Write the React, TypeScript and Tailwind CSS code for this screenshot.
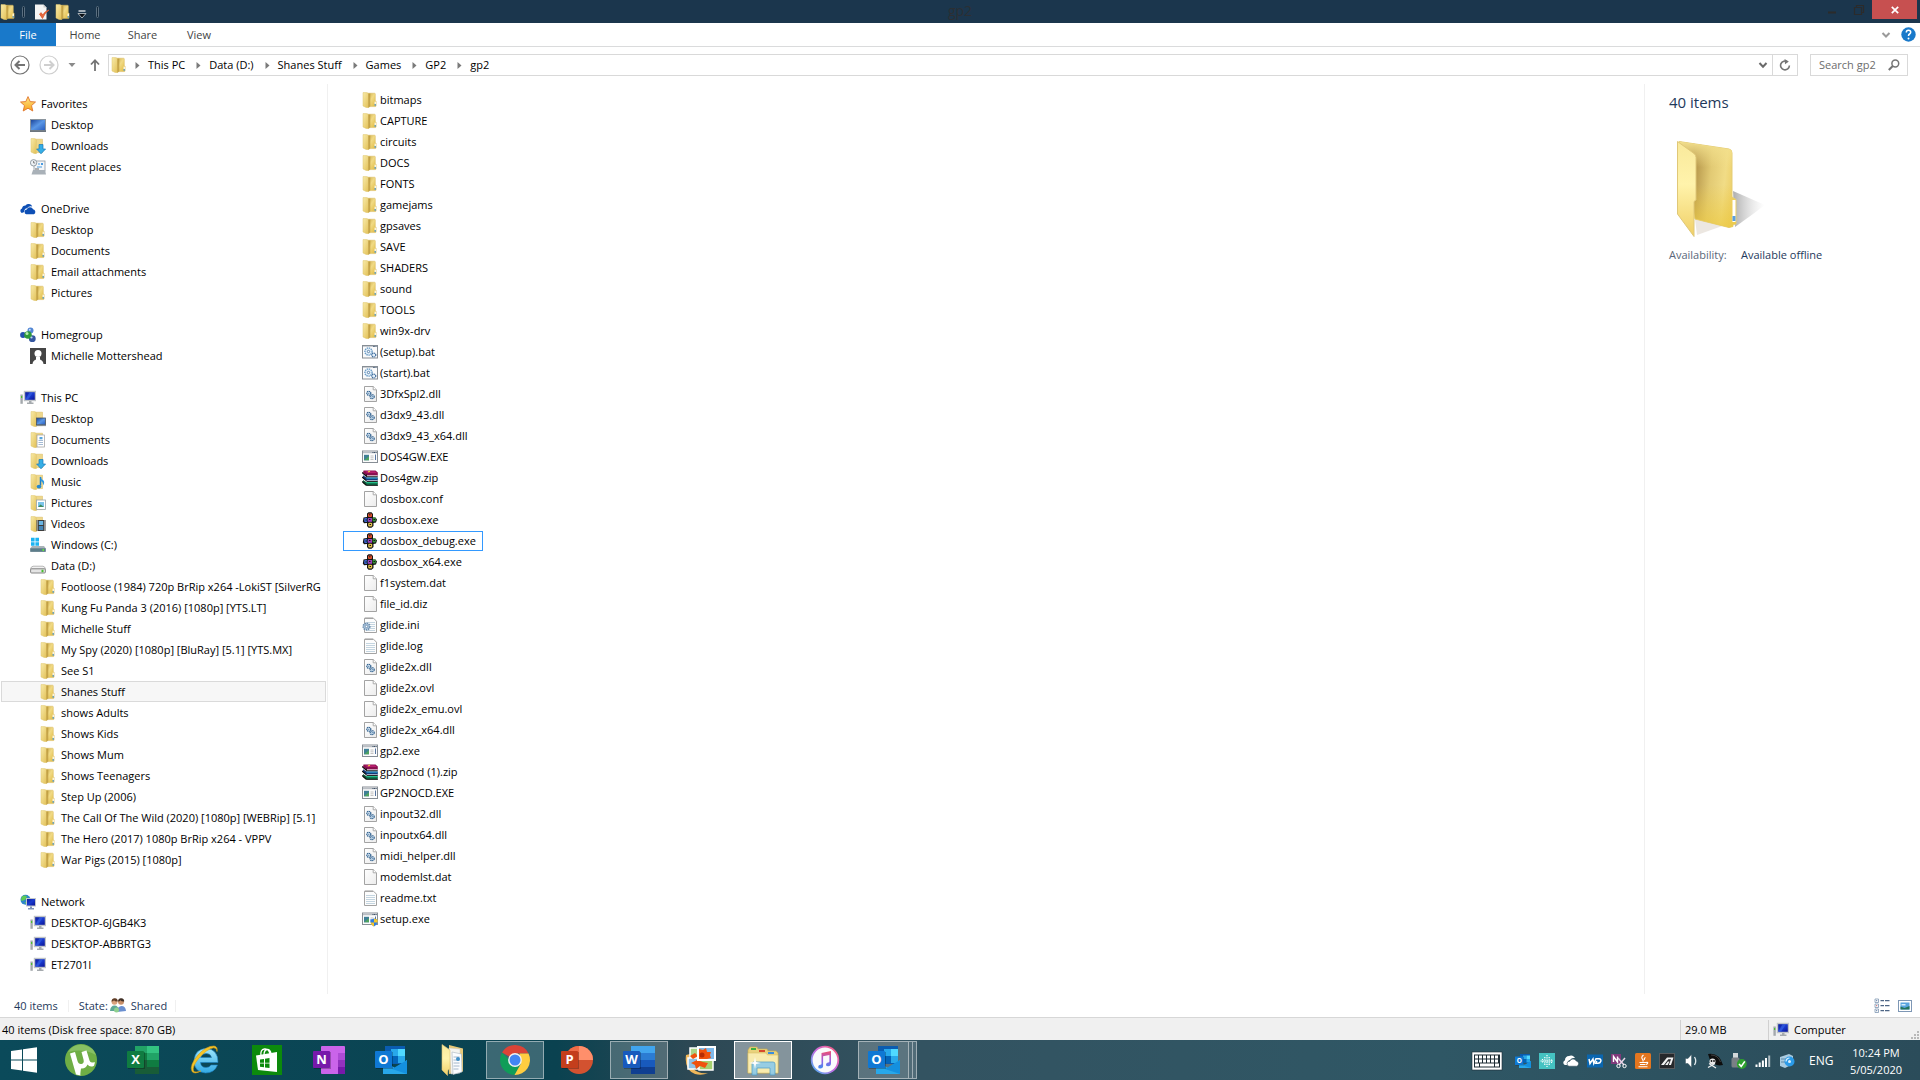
import React from "react";

type IconProps = { className?: string };

function Svg({ children, className = "h-4 w-4", box = "0 0 16 16" }: { children: React.ReactNode; className?: string; box?: string }) {
  return (
    <svg viewBox={box} className={"shrink-0 " + className} aria-hidden="true">
      {children}
    </svg>
  );
}

/* ---------- shared gradients ---------- */

function Gradients() {
  return (
    <svg className="absolute h-0 w-0" aria-hidden="true">
      <defs>
        <linearGradient id="folderFront" x1="0" y1="0" x2="1" y2="1">
          <stop offset="0" stopColor="#f8eaa9" />
          <stop offset="1" stopColor="#e2c055" />
        </linearGradient>
        <linearGradient id="folderBack" x1="0" y1="0" x2="1" y2="1">
          <stop offset="0" stopColor="#c9a945" />
          <stop offset="0.45" stopColor="#f1da85" />
          <stop offset="1" stopColor="#dfb83c" />
        </linearGradient>
        <linearGradient id="screen" x1="0" y1="0" x2="1" y2="1">
          <stop offset="0" stopColor="#0a1590" />
          <stop offset="0.5" stopColor="#1a3cd0" />
          <stop offset="1" stopColor="#080c8c" />
        </linearGradient>
        <linearGradient id="desk" x1="0" y1="0" x2="1" y2="1">
          <stop offset="0" stopColor="#173f96" />
          <stop offset="0.5" stopColor="#5a97e6" />
          <stop offset="1" stopColor="#2558bb" />
        </linearGradient>
        <linearGradient id="star" x1="0" y1="0" x2="0" y2="1">
          <stop offset="0" stopColor="#ffe98a" />
          <stop offset="1" stopColor="#f7a21b" />
        </linearGradient>
        <linearGradient id="paper" x1="0" y1="0" x2="1" y2="1">
          <stop offset="0" stopColor="#ffffff" />
          <stop offset="1" stopColor="#ececec" />
        </linearGradient>
        <linearGradient id="bigFront" x1="0" y1="0" x2="0" y2="1">
          <stop offset="0" stopColor="#f9e99b" />
          <stop offset="0.45" stopColor="#fff3ab" />
          <stop offset="1" stopColor="#f0cf66" />
        </linearGradient>
        <linearGradient id="bigBack" x1="0" y1="0" x2="1" y2="0.15">
          <stop offset="0.28" stopColor="#b09045" />
          <stop offset="0.6" stopColor="#e2ca74" />
          <stop offset="0.85" stopColor="#f1dc86" />
          <stop offset="1" stopColor="#edd06a" />
        </linearGradient>
        <linearGradient id="bigBackTop" x1="0" y1="0" x2="0" y2="1">
          <stop offset="0" stopColor="#f3e08d" />
          <stop offset="0.3" stopColor="#f3e08d" stopOpacity="0" />
        </linearGradient>
        <linearGradient id="bigBackLow" x1="0" y1="0" x2="0" y2="1">
          <stop offset="0.5" stopColor="#ecc93f" stopOpacity="0" />
          <stop offset="1" stopColor="#ecc93f" stopOpacity="0.7" />
        </linearGradient>
        <linearGradient id="shade" x1="0" y1="0" x2="1" y2="0">
          <stop offset="0" stopColor="#8c8c8c" stopOpacity="0.7" />
          <stop offset="1" stopColor="#c8c8c8" stopOpacity="0" />
        </linearGradient>
        <linearGradient id="ie" x1="0" y1="0" x2="0" y2="1">
          <stop offset="0" stopColor="#9fe6fb" />
          <stop offset="1" stopColor="#31a9e4" />
        </linearGradient>
        <linearGradient id="tunesRing" x1="1" y1="0" x2="0" y2="1">
          <stop offset="0" stopColor="#fb5c74" />
          <stop offset="0.5" stopColor="#c869e0" />
          <stop offset="1" stopColor="#3fb6f5" />
        </linearGradient>
        <linearGradient id="tunesNote" x1="0" y1="0" x2="0" y2="1">
          <stop offset="0" stopColor="#f0506e" />
          <stop offset="0.5" stopColor="#a05ae0" />
          <stop offset="1" stopColor="#3d8ff0" />
        </linearGradient>
      </defs>
    </svg>
  );
}

/* ---------- 16px icons ---------- */

function FolderShapes() {
  return (
    <>
      <path d="M5 1.2h7.5q.8 0 .8.8v6.4l.8.8v4.6q0 .8-.8.8H6z" fill="url(#folderBack)" stroke="#d8b95c" strokeWidth=".5" />
      <path d="M1 .6h3.800l2 1.200v13.900L4 15.400 1 14z" fill="url(#folderFront)" stroke="#dfc56c" strokeWidth=".5" />
      <path d="M6.300 1.800v13.800l2-1V1.500z" fill="#b8963a" opacity=".75" />
      <rect x="12.600" y="9.600" width="1.200" height="2.400" fill="#fff" />
      <rect x="12.600" y="12" width="1.200" height="1.800" fill="#4f9fe0" />
    </>
  );
}

const Folder = ({ className }: IconProps) => (
  <Svg className={className}>
    <FolderShapes />
  </Svg>
);

function FolderBase() {
  return (
    <>
      <path d="M5 1.200h7.500v13.400H5z" fill="#eed88c" stroke="#d8b95c" strokeWidth=".5" />
      <path d="M1 .6h3.800l1.600 1.200v13.900L4 15.400 1 14z" fill="url(#folderFront)" stroke="#dfc56c" strokeWidth=".5" />
    </>
  );
}

const FolderDown = () => (
  <Svg>
    <FolderBase />
    <path d="M9 6.500h4V11h2.600l-4.600 4.800L6.600 11H9z" fill="#35aee6" stroke="#1879b8" strokeWidth=".7" />
  </Svg>
);

const FolderDesk = () => (
  <Svg>
    <FolderBase />
    <rect x="6.500" y="7" width="9" height="6.800" fill="url(#desk)" stroke="#4a5560" strokeWidth=".8" />
    <path d="M6 14.600h10" stroke="#7d8790" />
  </Svg>
);

const FolderDoc = () => (
  <Svg>
    <FolderBase />
    <rect x="7" y="3" width="7.500" height="12" fill="#fff" stroke="#9a9a9a" strokeWidth=".7" />
    <path d="M8.500 8.500h4.500M8.500 10.500h4.500M8.500 12.500h4.500" stroke="#8ea9c9" strokeWidth=".8" />
    <rect x="9.500" y="5" width="3" height="2.300" fill="#57a5dd" />
  </Svg>
);

const FolderMusic = () => (
  <Svg>
    <FolderBase />
    <path d="M10.500 3v8.500" stroke="#1d7cc6" strokeWidth="1.500" />
    <path d="M10.500 2.500q.5 3 3 4 1.500 2-.4 5 .2-3.600-2.600-4.500z" fill="#2f98de" />
    <ellipse cx="9" cy="12.600" rx="2.300" ry="1.900" fill="#2488d0" />
  </Svg>
);

const FolderPic = () => (
  <Svg>
    <FolderBase />
    <rect x="6.500" y="5" width="9" height="9.500" fill="#fff" stroke="#9aa3aa" strokeWidth=".8" />
    <rect x="8" y="7" width="6" height="5" fill="#7cc4ea" />
    <path d="M8 12l2.500-2.500L14 12z" fill="#3f8a5a" />
  </Svg>
);

const FolderVideo = () => (
  <Svg>
    <FolderBase />
    <rect x="6.500" y="4" width="9" height="11" fill="#3d3d3d" />
    <path d="M7.500 4.500v10.500M14.500 4.500v10.500" stroke="#e8e8e8" strokeWidth="1" strokeDasharray="1 1" />
    <rect x="8.800" y="5" width="4.400" height="4" fill="#69b5e4" />
    <rect x="8.800" y="10" width="4.400" height="4" fill="#4586b8" />
  </Svg>
);

const StarIcon = () => (
  <Svg>
    <path d="M8 .6l2.200 5 5.300.4-4 3.600 1.300 5.400L8 12.200 3.200 15l1.300-5.400-4-3.600 5.300-.4z" fill="url(#star)" stroke="#e0752c" strokeWidth=".9" strokeLinejoin="round" />
  </Svg>
);

const DesktopIcon = () => (
  <Svg>
    <rect x=".5" y="2.500" width="15" height="11" fill="url(#desk)" stroke="#8b959e" />
    <path d="M0 14.200h16" stroke="#5d6770" strokeWidth="1.400" />
  </Svg>
);

const RecentIcon = () => (
  <Svg>
    <rect x="4" y="2" width="11" height="10" fill="#f4f6f8" stroke="#8e979f" strokeWidth=".8" />
    <circle cx="3.600" cy="3.800" r="3.200" fill="#eef2f5" stroke="#8a949c" strokeWidth=".9" />
    <path d="M3.600 2v2h1.600" stroke="#555" strokeWidth=".7" fill="none" />
    <rect x="11" y="4" width="2" height="2" fill="#4a9be0" />
    <path d="M8 5h2M7 8h5" stroke="#4a9be0" strokeWidth="1.100" />
    <path d="M3 11h12l1 4.500H1.500z" fill="#a9b1b8" />
    <path d="M5 10h4" stroke="#666" />
  </Svg>
);

const OneDriveIcon = () => (
  <Svg>
    <path d="M1.800 12A2.400 2.400 0 0 1 2 7.500 3.500 3.500 0 0 1 5.500 4.500 4 4 0 0 1 12.300 5.500Q9 4.500 7 7.300 4.200 7.600 4.300 11z" fill="#0d4fb5" />
    <path d="M6.300 13.200a2.400 2.400 0 0 1 .5-4.700 3.400 3.400 0 0 1 6.300-.2 2.600 2.600 0 0 1 .8 4.900z" fill="#0d4fb5" />
  </Svg>
);

const HomegroupIcon = () => (
  <Svg>
    <circle cx="10.500" cy="3.500" r="3" fill="#5286d4" />
    <circle cx="3" cy="8" r="2.900" fill="#2450ae" />
    <circle cx="12.300" cy="11.700" r="3.400" fill="#34569f" />
    <circle cx="8" cy="8" r="3.800" fill="#2f9a3a" />
    <circle cx="7" cy="6.600" r="1.500" fill="#b9ecb0" />
    <circle cx="9.800" cy="2.700" r="1" fill="#c4defa" />
    <circle cx="11.500" cy="10.500" r="1.100" fill="#bcd5f6" />
  </Svg>
);

const UserIcon = () => (
  <Svg>
    <rect width="16" height="16" fill="#454545" />
    <circle cx="8" cy="5.500" r="3.500" fill="#fff" />
    <path d="M2.500 16q.3-3.500 3.500-4.500V9h4v2.500q3.200 1 3.500 4.500z" fill="#fff" />
  </Svg>
);

function PcShapes() {
  return (
    <>
      <rect x="4.500" y="1.500" width="11" height="9" fill="url(#screen)" stroke="#bfc3c7" strokeWidth="1.400" />
      <path d="M9.500 2.300L5.500 9.500H8l5-7.200z" fill="#3f70ee" opacity=".5" />
      <path d="M9 11h2.500v1.500h2V14H7v-1.500h2z" fill="#a5aaae" />
      <path d="M.4 4.500h2.400v9.300H.4z" fill="#a4a9ad" />
      <rect x="1" y="6" width="1.200" height="2" fill="#49c22c" />
    </>
  );
}

const PcIcon = () => (
  <Svg>
    <PcShapes />
  </Svg>
);

const NetworkIcon = () => (
  <Svg>
    <circle cx="5.500" cy="5.700" r="5" fill="#2f86c9" />
    <path d="M2 2.500q3-2 5 0L5 6 1.500 7q-1-2 .5-4.500zM5 8l3 0-2 2.500z" fill="#5fcb55" />
    <rect x="6.500" y="4.500" width="9" height="7.500" fill="url(#screen)" stroke="#c3c7cb" />
    <path d="M10 12.500h2v1.500h2v1.500H8V14h2z" fill="#7f93b8" />
  </Svg>
);

const DriveC = () => (
  <Svg>
    <path d="M1 .8h3.600v3.600H1zM5.400.8H9v3.600H5.400zM1 5.200h3.600v3.600H1zM5.400 5.200H9v3.600H5.400z" fill="#1cb4f2" />
    <path d="M2 9h12l1.700 2.300v3.500H.3v-3.500z" fill="#aab3b8" />
    <path d="M.3 11.300h15.400v3.500H.3z" fill="#5c7d8a" />
    <rect x="12.500" y="12" width="1.500" height="2" fill="#61e33b" />
  </Svg>
);

const DriveD = () => (
  <Svg>
    <path d="M3 8.200h10q2.500.8 2.500 3H.5q0-2.200 2.500-3z" fill="#f1f1f1" stroke="#9c9c9c" strokeWidth=".7" />
    <rect x=".6" y="10.800" width="14.800" height="4.200" rx="1" fill="#e4e4e4" stroke="#7c7c7c" strokeWidth=".9" />
    <rect x="11.500" y="11.800" width="2" height="2.400" fill="#45bd2c" />
  </Svg>
);

const Page = ({ children }: { children?: React.ReactNode }) => (
  <Svg>
    <path d="M2.500.5h8.700l3.300 3.300v11.700h-12z" fill="url(#paper)" stroke="#a3a3a3" />
    <path d="M11.200.5v3.300h3.300" fill="#fff" stroke="#a3a3a3" strokeWidth=".9" />
    {children}
  </Svg>
);

const FilePage = () => <Page />;

const Dll = () => (
  <Page>
    <circle cx="6.800" cy="7.300" r="2" fill="#dcebf7" stroke="#356491" strokeWidth="1.300" strokeDasharray="1.200 .5" />
    <circle cx="10.200" cy="10.700" r="2" fill="#dcebf7" stroke="#356491" strokeWidth="1.300" strokeDasharray="1.200 .5" />
    <circle cx="6.800" cy="7.300" r=".6" fill="#41729f" />
    <circle cx="10.200" cy="10.700" r=".6" fill="#41729f" />
  </Page>
);

const Bat = () => (
  <Svg>
    <rect x=".5" y="1.500" width="15" height="12.500" fill="#fbfbfb" stroke="#878e95" />
    <path d="M1 2.500h14" stroke="#c9cdd2" strokeWidth="1" />
    <path d="M11 2.500h3.500" stroke="#49607a" strokeWidth="1" strokeDasharray=".8 .5" />
    <circle cx="6.500" cy="7.500" r="3.600" fill="#e4f0fa" stroke="#6b9cc6" strokeWidth="1.400" strokeDasharray="1.400 .7" />
    <circle cx="6.500" cy="7.500" r="1.200" fill="#fff" stroke="#3e6c9b" strokeWidth=".8" />
    <circle cx="11.800" cy="11" r="2" fill="#e4f0fa" stroke="#3e6c9b" strokeWidth="1.200" strokeDasharray="1.200 .5" />
  </Svg>
);

function ExeShapes() {
  return (
    <>
      <rect x=".5" y="2" width="15" height="11.500" fill="#fcfcfc" stroke="#878e95" />
      <path d="M1 3.500h14" stroke="#b9bec4" strokeWidth="1.500" />
      <path d="M10.500 3.500h4" stroke="#33465c" strokeWidth="1" strokeDasharray="1 .6" />
      <rect x="2" y="5.800" width="5" height="5.500" fill="#3f7f96" />
      <path d="M2 11.300l5-4v4z" fill="#4fa35f" />
      <path d="M8.500 7h3M8.500 8.800h3M8.500 10.500h3" stroke="#b5b5b5" strokeWidth=".8" />
      <path d="M13.500 5.500v5.500" stroke="#5775a0" strokeWidth="1" />
    </>
  );
}

const Exe = () => (
  <Svg>
    <ExeShapes />
  </Svg>
);

const SetupExe = () => (
  <Svg>
    <ExeShapes />
    <path d="M12 7.500q2 1 3.700 1 .2 5-3.700 7-3.900-2-3.700-7 1.700 0 3.700-1z" fill="#2f7de0" />
    <path d="M12 7.500q2 1 3.700 1v3H12zM8.400 11.500H12v4q-3-1.500-3.600-4z" fill="#f5c62c" />
  </Svg>
);

const Zip = () => (
  <Svg>
    <path d="M1.500.4h12l2.300 2.200v3.200H4.500L1 3z" fill="#8a1050" />
    <path d="M3 1.200h10l1.700 1.700H5z" fill="#b81f6f" />
    <path d="M1 5.300l3.500 2.200h11.300v3.300H4.500L1 8.500z" fill="#143a78" />
    <path d="M4.500 7.500h11v1.200h-11z" fill="#2c9fd0" />
    <path d="M1 10l3.500 2.200h11.300v3.500H4.500L1 13z" fill="#0c5c3c" />
    <path d="M4.500 12h11v1.300h-11z" fill="#22c08a" />
    <path d="M0 2.500l4.300 3.600v-1.500M0 7l4.300 3.600M0 11.500l4.300 3.700" stroke="#111" strokeWidth="1.200" fill="none" />
    <path d="M5 5.800h10.500M5 10.800h10.500M5 15.500h10.500" stroke="#f5f5f5" strokeWidth=".7" />
    <path d="M4.500 6.700h11.300M4.500 11.500h11.300M4.500 15.600h11.300" stroke="#111" strokeWidth=".9" />
    <path d="M6 2l2-.8" stroke="#f3c83a" strokeWidth="1.300" />
  </Svg>
);

const Dosbox = () => (
  <Svg>
    <path d="M5 1.500L6.500.3h3L11 2v3.500h2.500l1.500 2-1 3-2.500.5v3l-2 1.700h-3L5 14v-3l-3 .3L.8 9.500l.7-4L5 5z" fill="#141414" />
    <rect x="6" y="1.500" width="4" height="3.500" rx="1" fill="#e0502c" />
    <rect x="2.200" y="6" width="3.200" height="4" rx="1" fill="#3a66d0" />
    <rect x="10.600" y="5.500" width="3.200" height="4" rx="1" fill="#37923a" />
    <rect x="6.200" y="10.800" width="4" height="3.700" rx="1" fill="#e2c14a" />
    <rect x="6" y="6" width="4" height="3.800" fill="#9a3db8" />
    <path d="M7 2.800h1.500M3.500 8H5M11.500 7.500H13M7.500 12.500H9M7 7.500h1.500" stroke="#141414" strokeWidth="1" />
  </Svg>
);

const NotePage = () => (
  <Svg>
    <path d="M2.500 1.200h9l3 3v11.300h-12z" fill="#fdfdfd" stroke="#a3a3a3" />
    <path d="M3.500 1.200h8" stroke="#8b8b8b" strokeWidth="1.600" strokeDasharray="1 1" />
    <path d="M4 5.500h9M4 7.500h9M4 9.500h9M4 11.500h9M4 13.500h9" stroke="#bdd0dd" strokeWidth=".9" />
  </Svg>
);

const Ini = () => (
  <Svg>
    <path d="M2.500 1.200h9l3 3v11.300h-12z" fill="#fdfdfd" stroke="#a3a3a3" />
    <path d="M3.500 1.200h8" stroke="#8b8b8b" strokeWidth="1.600" strokeDasharray="1 1" />
    <path d="M4 5.500h9M4 7.500h9M4 9.500h9M4 11.500h9M4 13.500h9" stroke="#bdd0dd" strokeWidth=".9" />
    <circle cx="4.500" cy="9.500" r="3.300" fill="#a9c3da" stroke="#6d8eb0" strokeWidth="1.600" strokeDasharray="1.400 .8" />
    <circle cx="4.500" cy="9.500" r="1.200" fill="#fff" stroke="#5a7ea3" strokeWidth=".7" />
  </Svg>
);

const PeopleIcon = () => (
  <Svg>
    <circle cx="4.500" cy="3.800" r="3" fill="#d9a27c" />
    <path d="M1.500 3.500Q2 0 5 .3q3 .2 2.700 3.300-3 .2-3.700-1.300-.8 1.200-2.500 1.200z" fill="#5e3c26" />
    <path d="M0 13q.5-5.500 4.500-5.500T9 13z" fill="#5fa896" />
    <circle cx="11" cy="3.800" r="3" fill="#c98f68" />
    <path d="M8 3.500Q8.500 0 11.300.3q3 .2 2.900 3.300-3 .2-3.700-1.300-.8 1.200-2.500 1.200z" fill="#3f3027" />
    <path d="M7 14q.5-6 4.500-6t4.500 5z" fill="#6a8fd0" />
    <circle cx="6.500" cy="12" r="2.500" fill="#8fd08f" />
  </Svg>
);

/* ---------- data ---------- */

type NavRow = { text: string; level: 0 | 1 | 2; icon: () => React.ReactElement; selected?: boolean };

const F = () => <Folder />;

const navGroups: NavRow[][] = [
  [
    { text: "Favorites", level: 0, icon: StarIcon },
    { text: "Desktop", level: 1, icon: DesktopIcon },
    { text: "Downloads", level: 1, icon: FolderDown },
    { text: "Recent places", level: 1, icon: RecentIcon },
  ],
  [
    { text: "OneDrive", level: 0, icon: OneDriveIcon },
    { text: "Desktop", level: 1, icon: F },
    { text: "Documents", level: 1, icon: F },
    { text: "Email attachments", level: 1, icon: F },
    { text: "Pictures", level: 1, icon: F },
  ],
  [
    { text: "Homegroup", level: 0, icon: HomegroupIcon },
    { text: "Michelle Mottershead", level: 1, icon: UserIcon },
  ],
  [
    { text: "This PC", level: 0, icon: PcIcon },
    { text: "Desktop", level: 1, icon: FolderDesk },
    { text: "Documents", level: 1, icon: FolderDoc },
    { text: "Downloads", level: 1, icon: FolderDown },
    { text: "Music", level: 1, icon: FolderMusic },
    { text: "Pictures", level: 1, icon: FolderPic },
    { text: "Videos", level: 1, icon: FolderVideo },
    { text: "Windows (C:)", level: 1, icon: DriveC },
    { text: "Data (D:)", level: 1, icon: DriveD },
    { text: "Footloose (1984) 720p BrRip x264 -LokiST [SilverRG", level: 2, icon: F },
    { text: "Kung Fu Panda 3 (2016) [1080p] [YTS.LT]", level: 2, icon: F },
    { text: "Michelle Stuff", level: 2, icon: F },
    { text: "My Spy (2020) [1080p] [BluRay] [5.1] [YTS.MX]", level: 2, icon: F },
    { text: "See S1", level: 2, icon: F },
    { text: "Shanes Stuff", level: 2, icon: F, selected: true },
    { text: "shows Adults", level: 2, icon: F },
    { text: "Shows Kids", level: 2, icon: F },
    { text: "Shows Mum", level: 2, icon: F },
    { text: "Shows Teenagers", level: 2, icon: F },
    { text: "Step Up (2006)", level: 2, icon: F },
    { text: "The Call Of The Wild (2020) [1080p] [WEBRip] [5.1]", level: 2, icon: F },
    { text: "The Hero (2017) 1080p BrRip x264 - VPPV", level: 2, icon: F },
    { text: "War Pigs (2015) [1080p]", level: 2, icon: F },
  ],
  [
    { text: "Network", level: 0, icon: NetworkIcon },
    { text: "DESKTOP-6JGB4K3", level: 1, icon: PcIcon },
    { text: "DESKTOP-ABBRTG3", level: 1, icon: PcIcon },
    { text: "ET2701I", level: 1, icon: PcIcon },
  ],
];

const indent = { 0: "pl-[18px]", 1: "pl-[28px]", 2: "pl-[38px]" };

const files: [string, () => React.ReactElement][] = [
  ["bitmaps", F],
  ["CAPTURE", F],
  ["circuits", F],
  ["DOCS", F],
  ["FONTS", F],
  ["gamejams", F],
  ["gpsaves", F],
  ["SAVE", F],
  ["SHADERS", F],
  ["sound", F],
  ["TOOLS", F],
  ["win9x-drv", F],
  ["(setup).bat", Bat],
  ["(start).bat", Bat],
  ["3DfxSpl2.dll", Dll],
  ["d3dx9_43.dll", Dll],
  ["d3dx9_43_x64.dll", Dll],
  ["DOS4GW.EXE", Exe],
  ["Dos4gw.zip", Zip],
  ["dosbox.conf", FilePage],
  ["dosbox.exe", Dosbox],
  ["dosbox_debug.exe", Dosbox],
  ["dosbox_x64.exe", Dosbox],
  ["f1system.dat", FilePage],
  ["file_id.diz", FilePage],
  ["glide.ini", Ini],
  ["glide.log", NotePage],
  ["glide2x.dll", Dll],
  ["glide2x.ovl", FilePage],
  ["glide2x_emu.ovl", FilePage],
  ["glide2x_x64.dll", Dll],
  ["gp2.exe", Exe],
  ["gp2nocd (1).zip", Zip],
  ["GP2NOCD.EXE", Exe],
  ["inpout32.dll", Dll],
  ["inpoutx64.dll", Dll],
  ["midi_helper.dll", Dll],
  ["modemlst.dat", FilePage],
  ["readme.txt", NotePage],
  ["setup.exe", SetupExe],
];

/* ---------- window chrome ---------- */

const Grip = () => <span className="h-3 w-[3px] rounded-sm border border-[#5b6f80] bg-[#12283a]" />;

function TitleBar() {
  return (
    <header className="grid h-[23px] shrink-0 grid-cols-[1fr_auto_1fr] bg-[#1b364d]">
      <div className="flex items-center">
        <Folder />
        <span className="ml-[6px] flex"><Grip /></span>
        <button aria-label="Properties" className="ml-[9px]">
          <Svg>
            <path d="M1 .5h8.500l3 3v12H1z" fill="#f4f4f4" />
            <path d="M9.500.5v3h3" fill="#c9c9c9" />
            <path d="M5.500 10l3 4.500Q10.500 9 15 6q-4 1-6.300 5l-1.500-2.300z" fill="#e8673a" stroke="#d5532a" strokeWidth=".8" />
          </Svg>
        </button>
        <button aria-label="New folder" className="ml-[5px]"><Folder /></button>
        <button aria-label="Customize Quick Access Toolbar" className="ml-[5px] pt-1">
          <Svg className="h-3 w-3" box="0 0 12 12">
            <path d="M2.500 3h7" stroke="#fff" strokeWidth="1.200" />
            <path d="M2 5.500h8L6 10z" fill="#0a0f14" stroke="#dfe5ea" strokeWidth=".7" />
          </Svg>
        </button>
        <span className="ml-2 flex"><Grip /></span>
      </div>
      <h1 className="text-sm leading-[22px] text-[#2b2f33]">gp2</h1>
      <div className="flex items-start justify-end pr-[3px]">
        <button aria-label="Minimize" className="flex h-[19px] w-[26px] items-center justify-center">
          <Svg className="h-3 w-3" box="0 0 12 12"><path d="M2 8.500h8" stroke="#2b2b2b" strokeWidth="2" /></Svg>
        </button>
        <button aria-label="Restore" className="flex h-[19px] w-[27px] items-center justify-center">
          <Svg className="h-3 w-3" box="0 0 12 12">
            <path d="M1.500 3.500h7v7h-7zM3.500 3V1.500h7v7H9" stroke="#2b2b2b" strokeWidth="1.200" fill="none" />
          </Svg>
        </button>
        <button aria-label="Close" className="flex h-[19px] w-[45px] items-center justify-center bg-[#c75050]">
          <Svg className="h-2 w-2" box="0 0 8 8"><path d="M.8.8l6.400 6.400M7.200.8L.8 7.200" stroke="#fff" strokeWidth="1.700" /></Svg>
        </button>
      </div>
    </header>
  );
}

function Ribbon() {
  return (
    <div className="flex h-6 shrink-0 items-stretch border-b border-[#dadbdc] bg-white text-[#444]">
      <button className="w-14 bg-[#1979ca] text-white">File</button>
      <button className="w-[58px] pt-px">Home</button>
      <button className="w-[57px] pt-px">Share</button>
      <button className="w-[56px] pt-px">View</button>
      <div className="ml-auto flex items-center gap-[10px] pr-1">
        <button aria-label="Expand the Ribbon">
          <Svg className="h-[10px] w-[10px]" box="0 0 10 10"><path d="M1.500 3L5 6.500 8.500 3" stroke="#9a9a9a" strokeWidth="2" fill="none" /></Svg>
        </button>
        <button aria-label="Help">
          <Svg className="h-[15px] w-[15px]" box="0 0 15 15">
            <circle cx="7.500" cy="7.500" r="7.200" fill="#1979ca" />
            <path d="M5.300 5.500q0-2.200 2.200-2.200t2.200 2q0 1-1.100 1.700-1.100.7-1.100 1.900" stroke="#fff" strokeWidth="1.500" fill="none" />
            <circle cx="7.500" cy="11.500" r="1" fill="#fff" />
          </Svg>
        </button>
      </div>
    </div>
  );
}

const crumbs = ["This PC", "Data (D:)", "Shanes Stuff", "Games", "GP2", "gp2"];

function AddressBar() {
  return (
    <div className="flex shrink-0 items-center py-[7px] pl-[10px] pr-3">
      <button aria-label="Back">
        <Svg className="h-5 w-5" box="0 0 20 20">
          <circle cx="10" cy="10" r="9" fill="#fff" stroke="#747474" strokeWidth="1.200" />
          <path d="M15 10H6M9.500 6L5.500 10l4 4" stroke="#747474" strokeWidth="2" fill="none" />
        </Svg>
      </button>
      <button aria-label="Forward" className="ml-[9px]">
        <Svg className="h-5 w-5" box="0 0 20 20">
          <circle cx="10" cy="10" r="9" fill="#fff" stroke="#cfcfcf" strokeWidth="1.200" />
          <path d="M5 10h9M10.500 6l4 4-4 4" stroke="#cfcfcf" strokeWidth="2" fill="none" />
        </Svg>
      </button>
      <button aria-label="Recent locations" className="ml-[9px]">
        <Svg className="h-2 w-2" box="0 0 8 8"><path d="M.5 2h7L4 6z" fill="#8a8a8a" /></Svg>
      </button>
      <button aria-label="Up" className="ml-3">
        <Svg className="h-[14px] w-[14px]" box="0 0 14 14"><path d="M7 13V2.500M3 6.500L7 2.200l4 4.300" stroke="#747474" strokeWidth="1.800" fill="none" /></Svg>
      </button>
      <div className="ml-[6px] flex h-[22px] min-w-0 flex-1 items-stretch border border-[#d9d9d9]">
        <span className="flex items-center pl-[2px]"><Folder /></span>
        <nav aria-label="Address" className="flex items-center">
          {crumbs.map((c) => (
            <span key={c} className="flex items-center">
              <span className="flex w-[18px] justify-center pl-[3px]">
                <Svg className="h-[7px] w-[5px]" box="0 0 5 7"><path d="M.5 0v7l4-3.500z" fill="#7a7a7a" /></Svg>
              </span>
              <button className="px-[3px] text-black">{c}</button>
            </span>
          ))}
        </nav>
        <button aria-label="Previous locations" className="ml-auto w-[18px]">
          <Svg className="mx-auto h-[10px] w-[10px]" box="0 0 10 10"><path d="M1.500 3L5 6.800 8.500 3" stroke="#6a6a6a" strokeWidth="2" fill="none" /></Svg>
        </button>
        <button aria-label="Refresh" className="flex w-[25px] items-center justify-center border-l border-[#d9d9d9]">
          <Svg className="h-3 w-3" box="0 0 12 12">
            <path d="M8.500 2.800A4.400 4.400 0 1 0 10.400 6.500" stroke="#747474" strokeWidth="1.600" fill="none" />
            <path d="M5.500 0l4.300 2.600L6 5.200z" fill="#747474" />
          </Svg>
        </button>
      </div>
      <div className="ml-3 flex h-[22px] w-[98px] items-center border border-[#d9d9d9] pl-2 pr-[7px]">
        <input aria-label="Search gp2" placeholder="Search gp2" className="w-full min-w-0 bg-transparent outline-none placeholder:text-[#6d6d6d]" />
        <button aria-label="Search">
          <Svg className="h-3 w-3" box="0 0 12 12">
            <circle cx="7.300" cy="4.500" r="3.400" stroke="#747474" strokeWidth="1.500" fill="none" />
            <path d="M4.800 7L.8 11" stroke="#747474" strokeWidth="2" />
          </Svg>
        </button>
      </div>
    </div>
  );
}

/* ---------- panes ---------- */

function NavPane() {
  return (
    <nav aria-label="Navigation" className="flex w-[328px] shrink-0 flex-col gap-[21px] overflow-hidden border-r border-[#f0f0f0] pl-px pr-px pt-[9px] text-black">
      {navGroups.map((group) => (
        <ul key={group[0].text}>
          {group.map((row) => {
            const Icon = row.icon;
            return (
              <li key={row.text}>
                <a
                  href="#"
                  className={
                    "flex h-[21px] items-center gap-[5px] overflow-hidden whitespace-nowrap border " +
                    indent[row.level] +
                    (row.selected ? " border-[#dadada] bg-[#f7f7f7]" : " border-transparent")
                  }
                >
                  <Icon />
                  <span>{row.text}</span>
                </a>
              </li>
            );
          })}
        </ul>
      ))}
    </nav>
  );
}

function FileList() {
  return (
    <main className="min-w-0 flex-1 pl-[15px] pt-[5px]">
      <ul className="flex flex-col items-start">
        {files.map(([name, Icon]) => (
          <li key={name} className="flex h-[21px] items-center">
            <button
              className={
                "flex h-5 items-center gap-[2px] whitespace-nowrap border pl-[18px] pr-[6px] text-black " +
                (name === "dosbox_debug.exe" ? "border-[#3399ff]" : "border-transparent")
              }
            >
              <Icon />
              <span>{name}</span>
            </button>
          </li>
        ))}
      </ul>
    </main>
  );
}

function DetailsPane() {
  return (
    <aside className="w-[276px] shrink-0 border-l border-[#f0f0f0] pl-6 pt-[7px] text-[#1e395b]">
      <h2 className="text-[15px] leading-[22px]">40 items</h2>
      <svg viewBox="0 0 96 102" className="ml-[6px] mt-6 h-[102px] w-24" aria-hidden="true">
        <path d="M58 54l32 14-12 9-18 13z" fill="url(#shade)" />
        <path d="M20 82l30 6-28 10z" fill="#d9cfc4" opacity=".5" />
        <path d="M4 4.500L54 12q3 .6 3 4v44l4 2.500v24.500l-3 .5v2L54 90.500 20 82z" fill="url(#bigBack)" stroke="#e5cd77" strokeWidth="1" />
        <path d="M4 4.500L54 12q3 .6 3 4v44l4 2.500v24.500l-3 .5v2L54 90.500 20 82z" fill="url(#bigBackTop)" />
        <path d="M4 4.500L54 12q3 .6 3 4v44l4 2.500v24.500l-3 .5v2L54 90.500 20 82z" fill="url(#bigBackLow)" />
        <rect x="57.500" y="63" width="3" height="22" fill="#fff" />
        <rect x="57.500" y="79" width="3" height="5" fill="#5a9fe0" />
        <path d="M2.500 4.500L19 16.500q2 1.500 2 4V63l-2 1.500V99.500L2.500 77z" fill="url(#bigFront)" stroke="#e0c878" strokeWidth="1" />
      </svg>
      <dl className="mt-2 flex gap-3">
        <dt className="w-[60px] text-[#5a6779]">Availability:</dt>
        <dd>Available offline</dd>
      </dl>
    </aside>
  );
}

function StatusBars() {
  return (
    <footer className="shrink-0">
      <div className="flex h-[23px] items-center pl-[14px] pr-2 text-[#1e395b]">
        <span>40 items</span>
        <span className="ml-[10px] h-3 border-l border-[#f0f0f0]" />
        <span className="ml-[10px]">State:</span>
        <span className="ml-[2px] flex"><PeopleIcon /></span>
        <span className="ml-[5px]">Shared</span>
        <span className="ml-2 h-3 border-l border-[#f0f0f0]" />
        <button aria-label="Details view" className="ml-auto">
          <Svg>
            <path d="M1 1h3.500v3.500H1zM1 6h3.500v3.500H1zM1 11h3.500v3.500H1z" fill="#fff" stroke="#7f97b3" strokeWidth=".8" />
            <path d="M2.700 2.200v1M2.700 12.200v1" stroke="#3b5f8f" />
            <path d="M2.700 7.200v1" stroke="#c43c3c" />
            <path d="M6.500 2.700h3.500M11 2.700h4.500M6.500 7.700h3.500M11 7.700h4.500M6.500 12.700h3.500M11 12.700h4.500" stroke="#4d6585" strokeWidth="1.200" />
          </Svg>
        </button>
        <button aria-label="Large thumbnails" className="ml-2">
          <Svg className="h-[14px] w-[14px]" box="0 0 14 14">
            <rect x=".5" y="1.500" width="13" height="11" fill="#fff" stroke="#7e97b5" />
            <rect x="2.500" y="3.500" width="9" height="7" fill="#59a4df" />
            <path d="M2.500 10.500v-3l4 1.500 5-2v3.500z" fill="#24745c" />
            <path d="M3.500 5h4v1.500h-4z" fill="#d8eefb" />
          </Svg>
        </button>
      </div>
      <div className="flex h-[23px] items-center border-t border-[#d7d7d7] bg-[#f0f0f0] pl-[2px] pt-[2px] text-black">
        <span className="flex-1">40 items (Disk free space: 870 GB)</span>
        <span className="flex h-5 w-[88px] items-center border-l border-[#d0d0d0] pl-1">29.0 MB</span>
        <span className="flex h-5 w-[152px] items-center gap-[5px] border-l border-[#d0d0d0] pl-1">
          <PcIcon />
          <span>Computer</span>
          <span className="ml-auto flex self-end">
            <Svg className="h-[10px] w-[10px]" box="0 0 10 10">
              <path d="M7 1h2v2H7zM4 4h2v2H4zM7 4h2v2H7zM1 7h2v2H1zM4 7h2v2H4zM7 7h2v2H7z" fill="#b8b8b8" />
            </Svg>
          </span>
        </span>
      </div>
    </footer>
  );
}

/* ---------- taskbar ---------- */

const big = "h-8 w-8";

function Tile({ letter, color }: { letter: string; color: string }) {
  return (
    <>
      <rect x="1" y="8" width="17" height="17" fill="#000" opacity=".25" />
      <rect x="0" y="7" width="17" height="17" rx="1" fill={color} />
      <text x="8.500" y="20" textAnchor="middle" fontSize="13" fontWeight="700" fill="#fff" fontFamily="Open Sans, sans-serif">
        {letter}
      </text>
    </>
  );
}

const WindowsLogo = () => (
  <Svg className="h-[26px] w-[26px]" box="0 0 26 26">
    <path d="M0 4l11-1.600v10.100H0zM12 2.200L26 .2v12.300H12zM0 13.500h11v10.100L0 22zM12 13.500h14v12.300l-14-2z" fill="#fff" />
  </Svg>
);

const UTorrent = () => (
  <Svg className={big} box="0 0 32 32">
    <circle cx="16" cy="16" r="16" fill="#6fae45" />
    <path d="M3 8Q9-1 19 1q9 2 12 10Q18 4 3 8z" fill="#8fc46b" opacity=".8" />
    <path d="M5 9.500l5-1.500 2.500 9q1 3.500 4 3 3-.8 2-4.500L16.500 8l5-1.500 3 10q.7 2.300 3 2l2.500-.3-1 3.500q-4 2.300-6.500-1.200-1.800 4.500-6.500 4-1 6-.5 7l-4.500-1z" fill="#fff" />
  </Svg>
);

const Excel = () => (
  <Svg className={big} box="0 0 32 32">
    <rect x="8" y="2" width="24" height="28" fill="#21a366" />
    <rect x="20" y="2" width="12" height="7" fill="#33c481" />
    <rect x="8" y="9" width="12" height="7" fill="#107c41" />
    <rect x="20" y="9" width="12" height="7" fill="#21a366" />
    <rect x="8" y="16" width="12" height="14" fill="#185c37" />
    <rect x="20" y="16" width="12" height="7" fill="#107c41" />
    <rect x="8" y="23" width="24" height="7" fill="#185c37" />
    <Tile letter="X" color="#107c41" />
  </Svg>
);

const InternetExplorer = () => (
  <Svg className={big} box="0 0 32 32">
    <path d="M29 18.500H11.500q.5 5 5.500 5 3.500 0 5-2.500h6.500q-3 8-12 8Q5 28 5 16.500 6 5 17 4.500 29 5 29 18.500zM22.500 13.500q-.8-4-5.300-4t-5.500 4z" fill="url(#ie)" stroke="#1c7fc0" strokeWidth=".6" fillRule="evenodd" />
    <path d="M28 7.500q1-5-3-5.500Q17 2 9 11 0 21.500 3 27.500q2.500 3 9-.5-6 2-7.500 0Q3 22.500 10 14 18 5 24.500 3.800q3.500 0 3.500 3.700z" fill="#f6c528" stroke="#d9a015" strokeWidth=".6" />
  </Svg>
);

const Store = () => (
  <Svg className="h-[30px] w-[30px]" box="0 0 30 30">
    <rect width="30" height="30" fill="#0c8a0c" />
    <path d="M4 10.500L25 7v20L6 25z" fill="#fff" />
    <path d="M9 11Q8 4.500 12.500 4T18 9.500M12 10q0-5 3-5.500t4 4" stroke="#fff" strokeWidth="1.300" fill="none" />
    <path d="M8 14.500l4-.6v3.800H8zM13 13.700l4.500-.7v4.700H13zM8 18.600h4v3.700l-4-.5zM13 18.600h4.500V23l-4.500-.6z" fill="#0c8a0c" />
  </Svg>
);

const OneNote = () => (
  <Svg className={big} box="0 0 32 32">
    <rect x="8" y="2" width="24" height="28" rx="1" fill="#ca64ea" />
    <rect x="25" y="9" width="7" height="7" fill="#ae4bd5" />
    <rect x="25" y="16" width="7" height="7" fill="#9332bf" />
    <rect x="25" y="23" width="7" height="7" fill="#7719aa" />
    <Tile letter="N" color="#7719aa" />
  </Svg>
);

function OutlookShapes() {
  return (
    <>
      <rect x="10" y="2" width="20" height="18" fill="#0a5cb0" />
      <rect x="16" y="5" width="7" height="7" fill="#28a8ea" />
      <rect x="23" y="5" width="7" height="7" fill="#50d9ff" />
      <rect x="16" y="12" width="7" height="7" fill="#0364b8" />
      <rect x="23" y="12" width="7" height="7" fill="#28a8ea" />
      <path d="M8 16l12 8 12-8v14H8z" fill="#28a8ea" />
      <path d="M32 16L17 25l15 5z" fill="#1490df" />
      <Tile letter="O" color="#0f78d4" />
    </>
  );
}

const Outlook = ({ className = big }: IconProps) => (
  <Svg className={className} box="0 0 32 32">
    <OutlookShapes />
  </Svg>
);

const DocsFolder = () => (
  <Svg className={big} box="0 0 32 32">
    <path d="M12 1l14 3.500v23L12 30z" fill="#e8c978" />
    <path d="M12 4l11 1v24l-9 1z" fill="#f4f4f0" stroke="#c9c9c4" strokeWidth=".5" />
    <path d="M15 8l9.500 2 .5 18-9 2.500z" fill="#fafcff" stroke="#a8b4be" strokeWidth=".6" />
    <path d="M16.500 13h6M16.500 16h6M16.500 19h6M16.500 22h6M16.500 25h5" stroke="#8fa6bc" strokeWidth=".8" />
    <circle cx="21" cy="15" r="2" fill="#3e8fc8" />
    <path d="M5 .5l8 5.500v19l-2 1-.5 5.500L5 26z" fill="url(#bigFront)" stroke="#dcbf72" strokeWidth=".6" />
  </Svg>
);

const Chrome = () => (
  <Svg className={big} box="0 0 32 32">
    <path d="M16 16L3 8.500A15 15 0 0 1 29.500 9.500H16z" fill="#db4437" />
    <path d="M3 8.500A15 15 0 0 0 15.500 31l6.500-12-6 2.500z" fill="#0f9d58" />
    <path d="M29.500 9.500A15 15 0 0 1 15.500 31L22 19.500 20.500 9.500z" fill="#ffcd40" />
    <circle cx="16" cy="16" r="6.900" fill="#f1f1f1" />
    <circle cx="16" cy="16" r="5.500" fill="#4285f4" />
  </Svg>
);

const PowerPoint = () => (
  <Svg className={big} box="0 0 32 32">
    <circle cx="18" cy="16" r="14" fill="#d35230" />
    <path d="M18 2a14 14 0 0 1 14 14H18z" fill="#ff8f6b" />
    <path d="M18 2v14H4A14 14 0 0 1 18 2z" fill="#ed6c47" />
    <Tile letter="P" color="#c43e1c" />
  </Svg>
);

const Word = () => (
  <Svg className={big} box="0 0 32 32">
    <rect x="8" y="2" width="24" height="7" fill="#41a5ee" />
    <rect x="8" y="9" width="24" height="7" fill="#2b7cd3" />
    <rect x="8" y="16" width="24" height="7" fill="#185abd" />
    <rect x="8" y="23" width="24" height="7" fill="#103f91" />
    <Tile letter="W" color="#185abd" />
  </Svg>
);

const PhotoGallery = () => (
  <Svg className={big} box="0 0 32 32">
    <path d="M1 11Q-1 26 10 30q7 2 13-1-10 1-14.500-4Q3 20 5 10z" fill="#f0b75a" />
    <rect x="5" y="4" width="13" height="11" fill="#a9d489" stroke="#fff" strokeWidth="1.500" />
    <rect x="3" y="14" width="13" height="11" fill="#8fc3e8" stroke="#fff" strokeWidth="1.500" />
    <rect x="14" y="14" width="14" height="12" fill="#a5d070" stroke="#fff" strokeWidth="1.500" />
    <path d="M8 15l-3-3 5-3 3 3zM6 19l6-3 6 2 5 1-3 5-5-2-4 3-1-4z" fill="#f0520e" />
    <rect x="13" y="3" width="17" height="13" fill="#7fb9ea" stroke="#fff" strokeWidth="2" />
    <path d="M14 5l4 1 3-2 1 4 4 0-1 3 1 3-4 1H14z" fill="#f0520e" />
    <circle cx="17" cy="11" r="2.500" fill="#b52c06" />
  </Svg>
);

const ExplorerBig = () => (
  <Svg className={big} box="0 0 32 32">
    <path d="M1 6l2-3h7l1 2h9l1 2h8l2 2v20H1z" fill="#e9d27c" stroke="#c9ac4e" strokeWidth=".6" />
    <rect x="4" y="4" width="5" height="2" fill="#3fae3f" />
    <rect x="12" y="6" width="6" height="2" fill="#d84a2c" />
    <rect x="21" y="8" width="6" height="2" fill="#3a8ee0" />
    <path d="M1 9h18l1.500 2H31v18H1z" fill="#f8ebae" stroke="#d8bf68" strokeWidth=".6" />
    <path d="M5 31V20q0-2 2-2h19q2 0 2 2v11h-5v-7H10v7z" fill="#8fcbe8" stroke="#4c9cc8" strokeWidth=".8" opacity=".92" />
    <path d="M8 13l1 5 5 1-5 1-1 5-1-5-5-1 5-1z" fill="#fff" />
  </Svg>
);

const ITunes = () => (
  <Svg className={big} box="0 0 32 32">
    <circle cx="16" cy="16" r="13.300" fill="#fafafc" stroke="url(#tunesRing)" strokeWidth="1.800" />
    <path d="M12.500 9L22 7v12.500q0 2.500-2.800 2.800-2.400 0-2.200-1.900.3-1.600 2.200-1.900 1.200-.2 1.200-1V11l-6.300 1.300V22q0 2.300-2.800 2.600-2.300 0-2.100-1.900.3-1.700 2.200-1.900 1.100-.2 1.100-1z" fill="url(#tunesNote)" />
  </Svg>
);

type TaskItem = { label: string; icon: React.ReactElement; state?: "open" | "active" };

const tasks: TaskItem[] = [
  { label: "uTorrent", icon: <UTorrent /> },
  { label: "Excel", icon: <Excel /> },
  { label: "Internet Explorer", icon: <InternetExplorer /> },
  { label: "Store", icon: <Store /> },
  { label: "OneNote", icon: <OneNote /> },
  { label: "Outlook", icon: <Outlook /> },
  { label: "Documents", icon: <DocsFolder /> },
  { label: "Chrome", icon: <Chrome />, state: "open" },
  { label: "PowerPoint", icon: <PowerPoint /> },
  { label: "Word", icon: <Word />, state: "open" },
  { label: "Photo Gallery", icon: <PhotoGallery /> },
  { label: "File Explorer", icon: <ExplorerBig />, state: "active" },
  { label: "iTunes", icon: <ITunes /> },
];

const trayIcons: { label: string; icon: React.ReactElement }[] = [
  { label: "Outlook", icon: <Outlook className="h-4 w-4" /> },
  {
    label: "Fitbit Connect",
    icon: (
      <Svg>
        <rect width="16" height="16" fill="#45c2c2" />
        <path d="M8 2v12M5.800 4v8.500M10.200 4v8.500M3.500 6v4.500M12.500 6.500v3.500" stroke="#fff" strokeWidth="1.200" strokeDasharray="1.300 .9" />
        <path d="M1.500 8h13" stroke="#fff" strokeWidth="1.200" strokeDasharray="1.300 .9" />
      </Svg>
    ),
  },
  {
    label: "OneDrive",
    icon: (
      <Svg>
        <path d="M1.800 12A2.600 2.600 0 0 1 2 7.200 4 4 0 0 1 6 3a4.300 4.300 0 0 1 6 2Q8.500 4.500 7 7 4.200 7.600 4.300 12z" fill="#fff" />
        <path d="M6.300 13.200a2.500 2.500 0 0 1 .5-5 3.500 3.500 0 0 1 6.400-.2 2.700 2.700 0 0 1 .7 5.200z" fill="#fff" stroke="#2b4552" strokeWidth=".5" />
      </Svg>
    ),
  },
  {
    label: "WD",
    icon: (
      <Svg>
        <rect y="1.500" width="16" height="13" fill="#0a66b0" />
        <path d="M2 6l1 4.500L6 6l.8 4.500L9 5.800h3q2.500.3 1.800 2.500-.6 2-2.800 2H8.800L9.800 8" stroke="#fff" strokeWidth="1.500" fill="none" />
      </Svg>
    ),
  },
  {
    label: "OneNote clipper",
    icon: (
      <Svg>
        <rect y="1" width="10" height="10" fill="#80397b" />
        <path d="M2.500 9V3.500l4 5.500V3.500" stroke="#fff" strokeWidth="1.400" fill="none" />
        <path d="M7 5l6 7M14 5l-6 7" stroke="#e8d5e8" strokeWidth="1.500" />
        <circle cx="7.500" cy="13" r="1.700" stroke="#fff" fill="none" />
        <circle cx="13.500" cy="13" r="1.700" stroke="#fff" fill="none" />
      </Svg>
    ),
  },
  {
    label: "Java",
    icon: (
      <Svg>
        <rect width="16" height="16" rx="1.500" fill="#e3761f" />
        <path d="M8.500 2q-3 2.500-.8 4.500 1 1 0 2M10.500 4.500q-2 1 -.8 2.500" stroke="#fff" strokeWidth="1.100" fill="none" />
        <path d="M4.500 9.500h6.500q2.500-.5 1.500 1-.5 1-2 1M5 11.500h5M3.500 13.800h9" stroke="#fff" strokeWidth="1.100" fill="none" />
      </Svg>
    ),
  },
  {
    label: "Driver utility",
    icon: (
      <Svg>
        <rect x=".5" y=".5" width="15" height="15" fill="#26282b" stroke="#585b5e" />
        <path d="M2 12l6-7.500h6.500l-.6 1.800H9.300L5 12zM6.200 12l2.600-3.600h1.700L8.700 12zM9.800 12l2.500-6.500h1.900L12 12z" fill="#f2f2f2" />
      </Svg>
    ),
  },
  {
    label: "Volume",
    icon: (
      <Svg>
        <path d="M2.500 5.500H5l3.500-4v13l-3.500-4H2.500z" fill="#fff" stroke="#2b4552" strokeWidth=".4" />
        <path d="M11.500 4q2.500 4 0 8" stroke="#e3ebee" strokeWidth="1.300" fill="none" />
      </Svg>
    ),
  },
  {
    label: "Satellite",
    icon: (
      <Svg>
        <path d="M1 1Q12-1 16 12q-8 2-13-5z" fill="#0e0e0e" />
        <path d="M4 2q7 0 9.500 7" stroke="#4d4d4d" strokeWidth=".8" fill="none" />
        <circle cx="5.500" cy="8.500" r="3" fill="#e8e8e8" />
        <circle cx="4.500" cy="8" r=".9" fill="#111" />
        <circle cx="7" cy="8" r=".9" fill="#111" />
        <path d="M1 14.500l7-4M2 10.500l7 4.500" stroke="#f0f0f0" strokeWidth="1.200" />
      </Svg>
    ),
  },
  {
    label: "Safely Remove Hardware",
    icon: (
      <Svg>
        <rect x="2" y="0" width="5" height="5" fill="#d4d8da" />
        <rect x=".5" y="4.500" width="8" height="10" rx="1.500" fill="#7a8085" />
        <circle cx="10.800" cy="11" r="4.900" fill="#2ea12e" />
        <path d="M8 11l2.200 2.400 3.600-5" stroke="#fff" strokeWidth="1.600" fill="none" />
      </Svg>
    ),
  },
  {
    label: "Network signal",
    icon: (
      <Svg>
        <path d="M.5 11.500h2V14h-2zM3.700 9.500h2V14h-2zM6.900 7.500h2V14h-2zM10 5h2v9h-2z" fill="#fff" />
        <path d="M13.200 2.500h2V14h-2z" fill="#aebcc3" />
      </Svg>
    ),
  },
  {
    label: "Software update",
    icon: (
      <Svg>
        <path d="M1 4l9-3 4 2v8l-8 4-5-2z" fill="#a9cbe0" />
        <path d="M2 6h6M2 9h6" stroke="#5f8aa8" />
        <circle cx="10.500" cy="8.500" r="5" fill="#2b9be8" />
        <circle cx="10.500" cy="8.500" r="1.500" fill="#d9f0ff" />
        <path d="M10.500 5a3.500 3.500 0 0 0-3.500 3.500" stroke="#d9f0ff" strokeWidth="1.200" fill="none" />
      </Svg>
    ),
  },
];

function Taskbar() {
  return (
    <div className="flex h-10 shrink-0 items-center bg-[linear-gradient(90deg,#0b4a5a_0%,#0a4250_29%,#2d4854_36%,#335361_48%,#2f5765_75%,#2b4c5a_100%)] text-xs text-white">
      <button aria-label="Start" className="flex h-full w-12 items-center justify-center"><WindowsLogo /></button>
      <div className="flex h-full items-center gap-1 pl-1">
        {tasks.map((t) => (
          <button
            key={t.label}
            aria-label={t.label}
            className={
              "flex h-[38px] w-[58px] items-center justify-center border " +
              (t.state === "active"
                ? "border-white bg-[#84949c]"
                : t.state === "open"
                  ? "border-white/45 bg-white/20"
                  : "border-transparent")
            }
          >
            {t.icon}
          </button>
        ))}
        <div className="flex h-[38px]">
          <button aria-label="Outlook windows" className="flex w-[51px] items-center justify-center border border-white/45 bg-white/20">
            <Outlook />
          </button>
          <span className="w-1 border-y border-r border-white/45 bg-white/15" />
          <span className="w-1 border-y border-r border-white/45 bg-white/15" />
        </div>
      </div>
      <div className="ml-auto flex h-full items-center pr-[14px] pt-[2px]">
        <button aria-label="Touch keyboard" className="mr-2">
          <Svg className="h-5 w-8" box="0 0 32 20">
            <rect x="1" y="1" width="30" height="18" fill="#fff" stroke="#1c2b33" strokeWidth=".6" />
            <rect x="3" y="3.500" width="26" height="13" fill="#1c2b33" />
            <path d="M4 6h24M4 10h24" stroke="#fff" strokeWidth="3" strokeDasharray="3 1" />
            <path d="M4 14h4M9 14h14M24 14h4" stroke="#fff" strokeWidth="3" />
          </Svg>
        </button>
        {trayIcons.map((t) => (
          <button key={t.label} aria-label={t.label} className="flex h-6 w-6 items-center justify-center">{t.icon}</button>
        ))}
        <button className="ml-[10px] w-6 text-xs">ENG</button>
        <button className="ml-[13px] w-[60px] text-center text-[11px] leading-[17px]">
          <span className="block">10:24 PM</span>
          <span className="block">5/05/2020</span>
        </button>
      </div>
    </div>
  );
}

export default function App() {
  return (
    <div className="flex h-screen flex-col overflow-hidden bg-white font-['Open_Sans','Noto_Sans',sans-serif] text-[11px] leading-4">
      <Gradients />
      <TitleBar />
      <Ribbon />
      <AddressBar />
      <div className="flex min-h-0 flex-1 pt-px">
        <NavPane />
        <FileList />
        <DetailsPane />
      </div>
      <StatusBars />
      <Taskbar />
    </div>
  );
}
